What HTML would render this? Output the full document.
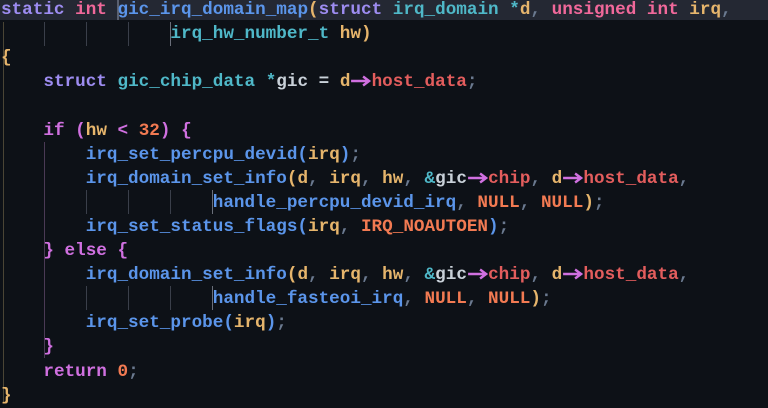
<!DOCTYPE html>
<html><head><meta charset="utf-8"><style>
html,body{margin:0;padding:0;background:#0d1117;width:768px;height:402px;overflow:hidden}
.l{position:absolute;left:1px;height:24.1px;line-height:24.1px;font-family:"Liberation Mono",monospace;font-size:17.65px;white-space:pre;color:#c9d1d9;font-weight:bold}
.hl{position:absolute;left:0;top:0;width:768px;height:20px;background:#242833}
.g{position:absolute;width:1px;background:#3a3f4a}
.kw{color:#9d8cf0}.ty{color:#f0689a}.fn{color:#5b95ea}.tp{color:#4fb8c8}.pa{color:#e6b56c}
.fd{color:#e35d5d}.cn{color:#f27a52}.ct{color:#d070e0}.p{color:#6b7a90}.op{color:#4fb8c8}
.ar{display:inline-block;width:2ch;height:12px;vertical-align:-1px}
.ar svg{display:block;width:100%;height:12px}
.br{color:#e6b56c}.bm{color:#d070e0}
</style></head><body>
<div class="hl"></div>
<div style="position:absolute;left:117px;top:0;width:2px;height:20px;background:#5a6070"></div>
<div class="g" style="left:3px;top:22px;height:380px;background:#4a4535"></div>
<div class="g" style="left:44px;top:22px;height:24px"></div>
<div class="g" style="left:86px;top:22px;height:24px"></div>
<div class="g" style="left:128px;top:22px;height:24px"></div>
<div class="g" style="left:170px;top:22px;height:24px;background:#6a6f7a"></div>
<div class="g" style="left:44px;top:142px;height:120px;background:#4a3a55"></div>
<div class="g" style="left:44px;top:262px;height:96px;background:#4a3a55"></div>
<div class="g" style="left:86px;top:190px;height:24px"></div>
<div class="g" style="left:128px;top:190px;height:24px"></div>
<div class="g" style="left:170px;top:190px;height:24px"></div>
<div class="g" style="left:212px;top:190px;height:24px;background:#6a6f7a"></div>
<div class="g" style="left:86px;top:286px;height:24px"></div>
<div class="g" style="left:128px;top:286px;height:24px"></div>
<div class="g" style="left:170px;top:286px;height:24px"></div>
<div class="g" style="left:212px;top:286px;height:24px;background:#6a6f7a"></div>

<div class="l" style="top:-2px"><span class="kw">static</span> <span class="ty">int</span> <span class="fn">gic_irq_domain_map</span><span class="br">(</span><span class="kw">struct</span> <span class="tp">irq_domain</span> <span class="op">*</span><span class="pa">d</span><span class="p">,</span> <span class="ty">unsigned</span> <span class="ty">int</span> <span class="pa">irq</span><span class="p">,</span></div>
<div class="l" style="top:22.1px">                <span class="tp">irq_hw_number_t</span> <span class="pa">hw</span><span class="br">)</span></div>
<div class="l" style="top:46.2px"><span class="br">{</span></div>
<div class="l" style="top:70.3px">    <span class="kw">struct</span> <span class="tp">gic_chip_data</span> <span class="op">*</span>gic = <span class="pa">d</span><span class="ar"><svg viewBox="0 0 21 12"><path d="M1 6H18M13 1.5L19 6L13 10.5" fill="none" stroke="#d070e0" stroke-width="2.4"/></svg></span><span class="fd">host_data</span><span class="p">;</span></div>
<div class="l" style="top:118.5px">    <span class="ct">if</span> <span class="bm">(</span><span class="pa">hw</span> <span class="bm">&lt;</span> <span class="cn">32</span><span class="bm">)</span> <span class="bm">{</span></div>
<div class="l" style="top:142.6px">        <span class="fn">irq_set_percpu_devid(</span><span class="pa">irq</span><span class="fn">)</span><span class="p">;</span></div>
<div class="l" style="top:166.7px">        <span class="fn">irq_domain_set_info</span><span class="br">(</span><span class="pa">d</span><span class="p">,</span> <span class="pa">irq</span><span class="p">,</span> <span class="pa">hw</span><span class="p">,</span> <span class="op">&amp;</span>gic<span class="ar"><svg viewBox="0 0 21 12"><path d="M1 6H18M13 1.5L19 6L13 10.5" fill="none" stroke="#d070e0" stroke-width="2.4"/></svg></span><span class="fd">chip</span><span class="p">,</span> <span class="pa">d</span><span class="ar"><svg viewBox="0 0 21 12"><path d="M1 6H18M13 1.5L19 6L13 10.5" fill="none" stroke="#d070e0" stroke-width="2.4"/></svg></span><span class="fd">host_data</span><span class="p">,</span></div>
<div class="l" style="top:190.8px">                    <span class="fn">handle_percpu_devid_irq</span><span class="p">,</span> <span class="cn">NULL</span><span class="p">,</span> <span class="cn">NULL</span><span class="br">)</span><span class="p">;</span></div>
<div class="l" style="top:214.9px">        <span class="fn">irq_set_status_flags(</span><span class="pa">irq</span><span class="p">,</span> <span class="cn">IRQ_NOAUTOEN</span><span class="fn">)</span><span class="p">;</span></div>
<div class="l" style="top:239px">    <span class="bm">}</span> <span class="ct">else</span> <span class="bm">{</span></div>
<div class="l" style="top:263.1px">        <span class="fn">irq_domain_set_info</span><span class="br">(</span><span class="pa">d</span><span class="p">,</span> <span class="pa">irq</span><span class="p">,</span> <span class="pa">hw</span><span class="p">,</span> <span class="op">&amp;</span>gic<span class="ar"><svg viewBox="0 0 21 12"><path d="M1 6H18M13 1.5L19 6L13 10.5" fill="none" stroke="#d070e0" stroke-width="2.4"/></svg></span><span class="fd">chip</span><span class="p">,</span> <span class="pa">d</span><span class="ar"><svg viewBox="0 0 21 12"><path d="M1 6H18M13 1.5L19 6L13 10.5" fill="none" stroke="#d070e0" stroke-width="2.4"/></svg></span><span class="fd">host_data</span><span class="p">,</span></div>
<div class="l" style="top:287.2px">                    <span class="fn">handle_fasteoi_irq</span><span class="p">,</span> <span class="cn">NULL</span><span class="p">,</span> <span class="cn">NULL</span><span class="br">)</span><span class="p">;</span></div>
<div class="l" style="top:311.3px">        <span class="fn">irq_set_probe(</span><span class="pa">irq</span><span class="fn">)</span><span class="p">;</span></div>
<div class="l" style="top:335.4px">    <span class="bm">}</span></div>
<div class="l" style="top:359.5px">    <span class="ct">return</span> <span class="cn">0</span><span class="p">;</span></div>
<div class="l" style="top:383.6px"><span class="br">}</span></div>
</body></html>
